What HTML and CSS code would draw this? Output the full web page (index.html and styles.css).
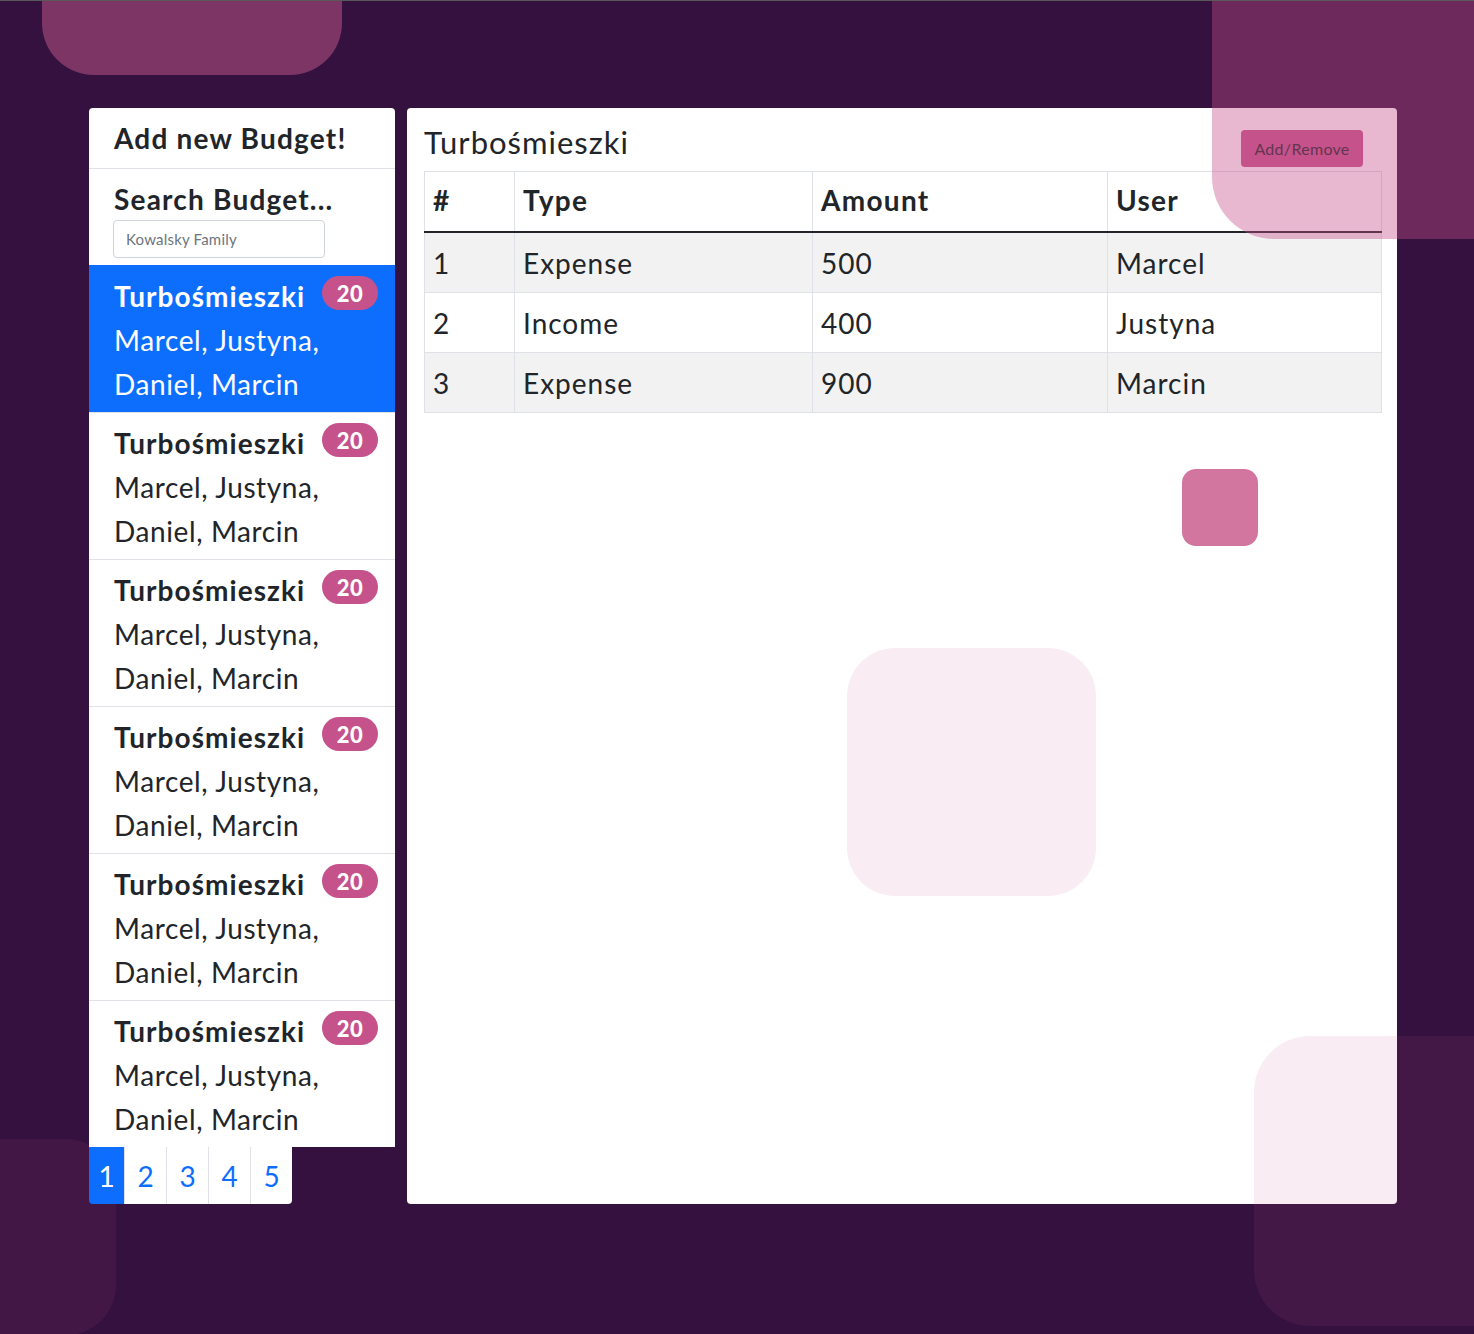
FILE: index.html
```html
<!DOCTYPE html>
<html lang="pl">
<head>
<meta charset="utf-8">
<title>Budgets</title>
<link rel="stylesheet" href="styles.css">
</head>
<body>
<div class="shape shape-tl"></div>
<div class="shape shape-bl"></div>
<main class="layout">
  <section class="sidebar">
    <ul class="list">
      <li class="list-item head"><h2 class="heading">Add new Budget!</h2></li>
      <li class="list-item search">
        <h2 class="heading">Search Budget...</h2>
        <input class="search-input" type="text" placeholder="Kowalsky Family">
      </li>
      <li class="list-item budget active">
        <div class="budget-top"><span class="budget-name">Turbośmieszki</span><span class="badge">20</span></div>
        <div class="budget-users">Marcel, Justyna,<br>Daniel, Marcin</div>
      </li>
      <li class="list-item budget">
        <div class="budget-top"><span class="budget-name">Turbośmieszki</span><span class="badge">20</span></div>
        <div class="budget-users">Marcel, Justyna,<br>Daniel, Marcin</div>
      </li>
      <li class="list-item budget">
        <div class="budget-top"><span class="budget-name">Turbośmieszki</span><span class="badge">20</span></div>
        <div class="budget-users">Marcel, Justyna,<br>Daniel, Marcin</div>
      </li>
      <li class="list-item budget">
        <div class="budget-top"><span class="budget-name">Turbośmieszki</span><span class="badge">20</span></div>
        <div class="budget-users">Marcel, Justyna,<br>Daniel, Marcin</div>
      </li>
      <li class="list-item budget">
        <div class="budget-top"><span class="budget-name">Turbośmieszki</span><span class="badge">20</span></div>
        <div class="budget-users">Marcel, Justyna,<br>Daniel, Marcin</div>
      </li>
      <li class="list-item budget">
        <div class="budget-top"><span class="budget-name">Turbośmieszki</span><span class="badge">20</span></div>
        <div class="budget-users">Marcel, Justyna,<br>Daniel, Marcin</div>
      </li>
    </ul>
    <nav class="pagination">
      <a class="page p1 current">1</a>
      <a class="page">2</a>
      <a class="page">3</a>
      <a class="page">4</a>
      <a class="page last">5</a>
    </nav>
  </section>
  <section class="detail">
    <div class="detail-head">
      <h3 class="detail-title">Turbośmieszki</h3>
      <button class="btn-add">Add/Remove</button>
    </div>
    <table class="tx">
      <colgroup><col class="c1"><col class="c2"><col class="c3"><col class="c4"></colgroup>
      <thead>
        <tr><th>#</th><th>Type</th><th>Amount</th><th>User</th></tr>
      </thead>
      <tbody>
        <tr class="odd"><td>1</td><td>Expense</td><td>500</td><td>Marcel</td></tr>
        <tr><td>2</td><td>Income</td><td>400</td><td>Justyna</td></tr>
        <tr class="odd"><td>3</td><td>Expense</td><td>900</td><td>Marcin</td></tr>
      </tbody>
    </table>
  </section>
</main>
<div class="shape shape-small"></div>
<div class="shape shape-mid"></div>
<div class="shape shape-tr"></div>
<div class="shape shape-br"></div>
</body>
</html>
```
FILE: styles.css
```css
html, body {
  margin: 0;
  padding: 0;
  width: 1474px;
  height: 1334px;
  overflow: hidden;
}
body {
  position: relative;
  background: #35113f;
  border-top: 1px solid #595959;
  box-sizing: border-box;
  font-family: "Lato", "Noto Sans", sans-serif;
  color: #212529;
}
.layout {
  position: relative;
  z-index: 1;
  display: flex;
  align-items: flex-start;
  gap: 12px;
  padding: 107px 0 0 89px;
}
.sidebar {
  width: 306px;
  display: flex;
  flex-direction: column;
}
.list {
  list-style: none;
  margin: 0;
  padding: 0;
  background: #fff;
  border-radius: 4px 4px 0 0;
  overflow: hidden;
}
.list-item {
  border-top: 1px solid #dee2e6;
  padding: 0 25px;
}
.list-item:first-child { border-top: none; }
.heading {
  margin: 0;
  font-size: 28px;
  font-weight: 700;
  line-height: 34px;
  letter-spacing: 1.2px;
}
.head {
  height: 60px;
  display: flex;
  align-items: center;
}
.search {
  height: 97px;
  box-sizing: border-box;
  padding-top: 13px;
}
.search-input {
  display: block;
  margin: 4px 0 0 -1px;
  width: 212px;
  height: 38px;
  box-sizing: border-box;
  border: 1px solid #ced4da;
  border-radius: 4px;
  padding: 0 12px;
  font-family: "Lato", sans-serif;
  font-size: 15px;
  letter-spacing: 0.2px;
  color: #495057;
}
.search-input::placeholder { color: #6c757d; }
.budget {
  padding: 8px 17px 6px 25px;
}
.budget.active {
  background: #0d6efd;
  color: #fff;
  border-top-color: #0d6efd;
}
.budget-top {
  display: flex;
  justify-content: space-between;
  align-items: center;
  height: 44px;
}
.budget-name {
  font-size: 28px;
  font-weight: 700;
  letter-spacing: 1.05px;
}
.badge {
  width: 56px;
  height: 34px;
  border-radius: 17px;
  background: #c5528a;
  color: #fff;
  font-size: 22px;
  font-weight: 900;
  letter-spacing: 0.5px;
  display: flex;
  align-items: center;
  justify-content: center;
  margin-top: -6px;
}
.budget-users {
  font-size: 28px;
  line-height: 44px;
  letter-spacing: 0.6px;
}
.pagination {
  display: flex;
  height: 57px;
}
.page {
  width: 41px;
  background: #fff;
  border-left: 1px solid #dee2e6;
  color: #0d6efd;
  font-size: 28px;
  display: flex;
  align-items: center;
  justify-content: center;
}
.page.p1 {
  width: 35px;
  border-left: none;
  border-radius: 0 0 0 4px;
}
.page.current {
  background: #0d6efd;
  color: #fff;
}
.page.last { border-radius: 0 0 4px 0; }
.detail {
  width: 990px;
  height: 1096px;
  box-sizing: border-box;
  background: #fff;
  border-radius: 4px;
  padding: 22px 16px 0 17px;
}
.detail-head {
  display: flex;
  justify-content: space-between;
  align-items: flex-start;
  height: 41px;
}
.detail-title {
  margin: -3px 0 0;
  font-size: 31px;
  font-weight: 400;
  line-height: 30px;
  letter-spacing: 1px;
}
.btn-add {
  width: 122px;
  height: 37px;
  margin-right: 18px;
  border: none;
  border-radius: 4px;
  background: #c6558a;
  color: #212529;
  font-family: "Lato", sans-serif;
  font-size: 16px;
  letter-spacing: 0.3px;
}
.tx {
  width: 957px;
  border-collapse: collapse;
  table-layout: fixed;
  font-size: 28px;
}
.c1 { width: 90px; }
.c2 { width: 298px; }
.c3 { width: 295px; }
.c4 { width: 274px; }
.tx th, .tx td {
  border: 1px solid #dee2e6;
  text-align: left;
  padding: 0 8px;
}
.tx th {
  height: 56px;
  font-weight: 700;
  letter-spacing: 1.3px;
  border-bottom: 2px solid #212529;
  padding-bottom: 3px;
}
.tx td {
  height: 59px;
  font-weight: 400;
  letter-spacing: 1px;
}
.tx tr.odd td { background: #f2f2f2; }

.shape {
  position: absolute;
  pointer-events: none;
}
.shape-tl {
  left: 42px;
  top: 0;
  width: 300px;
  height: 74px;
  border-radius: 0 0 52px 52px;
  background: #7d3566;
  z-index: 0;
}
.shape-bl {
  left: 0;
  top: 1138px;
  width: 116px;
  height: 196px;
  border-radius: 0 50px 50px 0;
  background: #421746;
  z-index: 0;
}
.shape-small {
  left: 1182px;
  top: 468px;
  width: 76px;
  height: 77px;
  border-radius: 14px;
  background: #d276a0;
  z-index: 2;
}
.shape-mid {
  left: 847px;
  top: 647px;
  width: 249px;
  height: 248px;
  border-radius: 48px;
  background: rgba(195, 78, 137, 0.1);
  z-index: 2;
}
.shape-tr {
  left: 1212px;
  top: 0;
  width: 262px;
  height: 238px;
  border-radius: 0 0 0 62px;
  background: rgba(195, 78, 137, 0.4);
  z-index: 3;
}
.shape-br {
  left: 1254px;
  top: 1035px;
  width: 220px;
  height: 290px;
  border-radius: 56px 0 0 56px;
  background: rgba(195, 78, 137, 0.1);
  z-index: 3;
}
```
